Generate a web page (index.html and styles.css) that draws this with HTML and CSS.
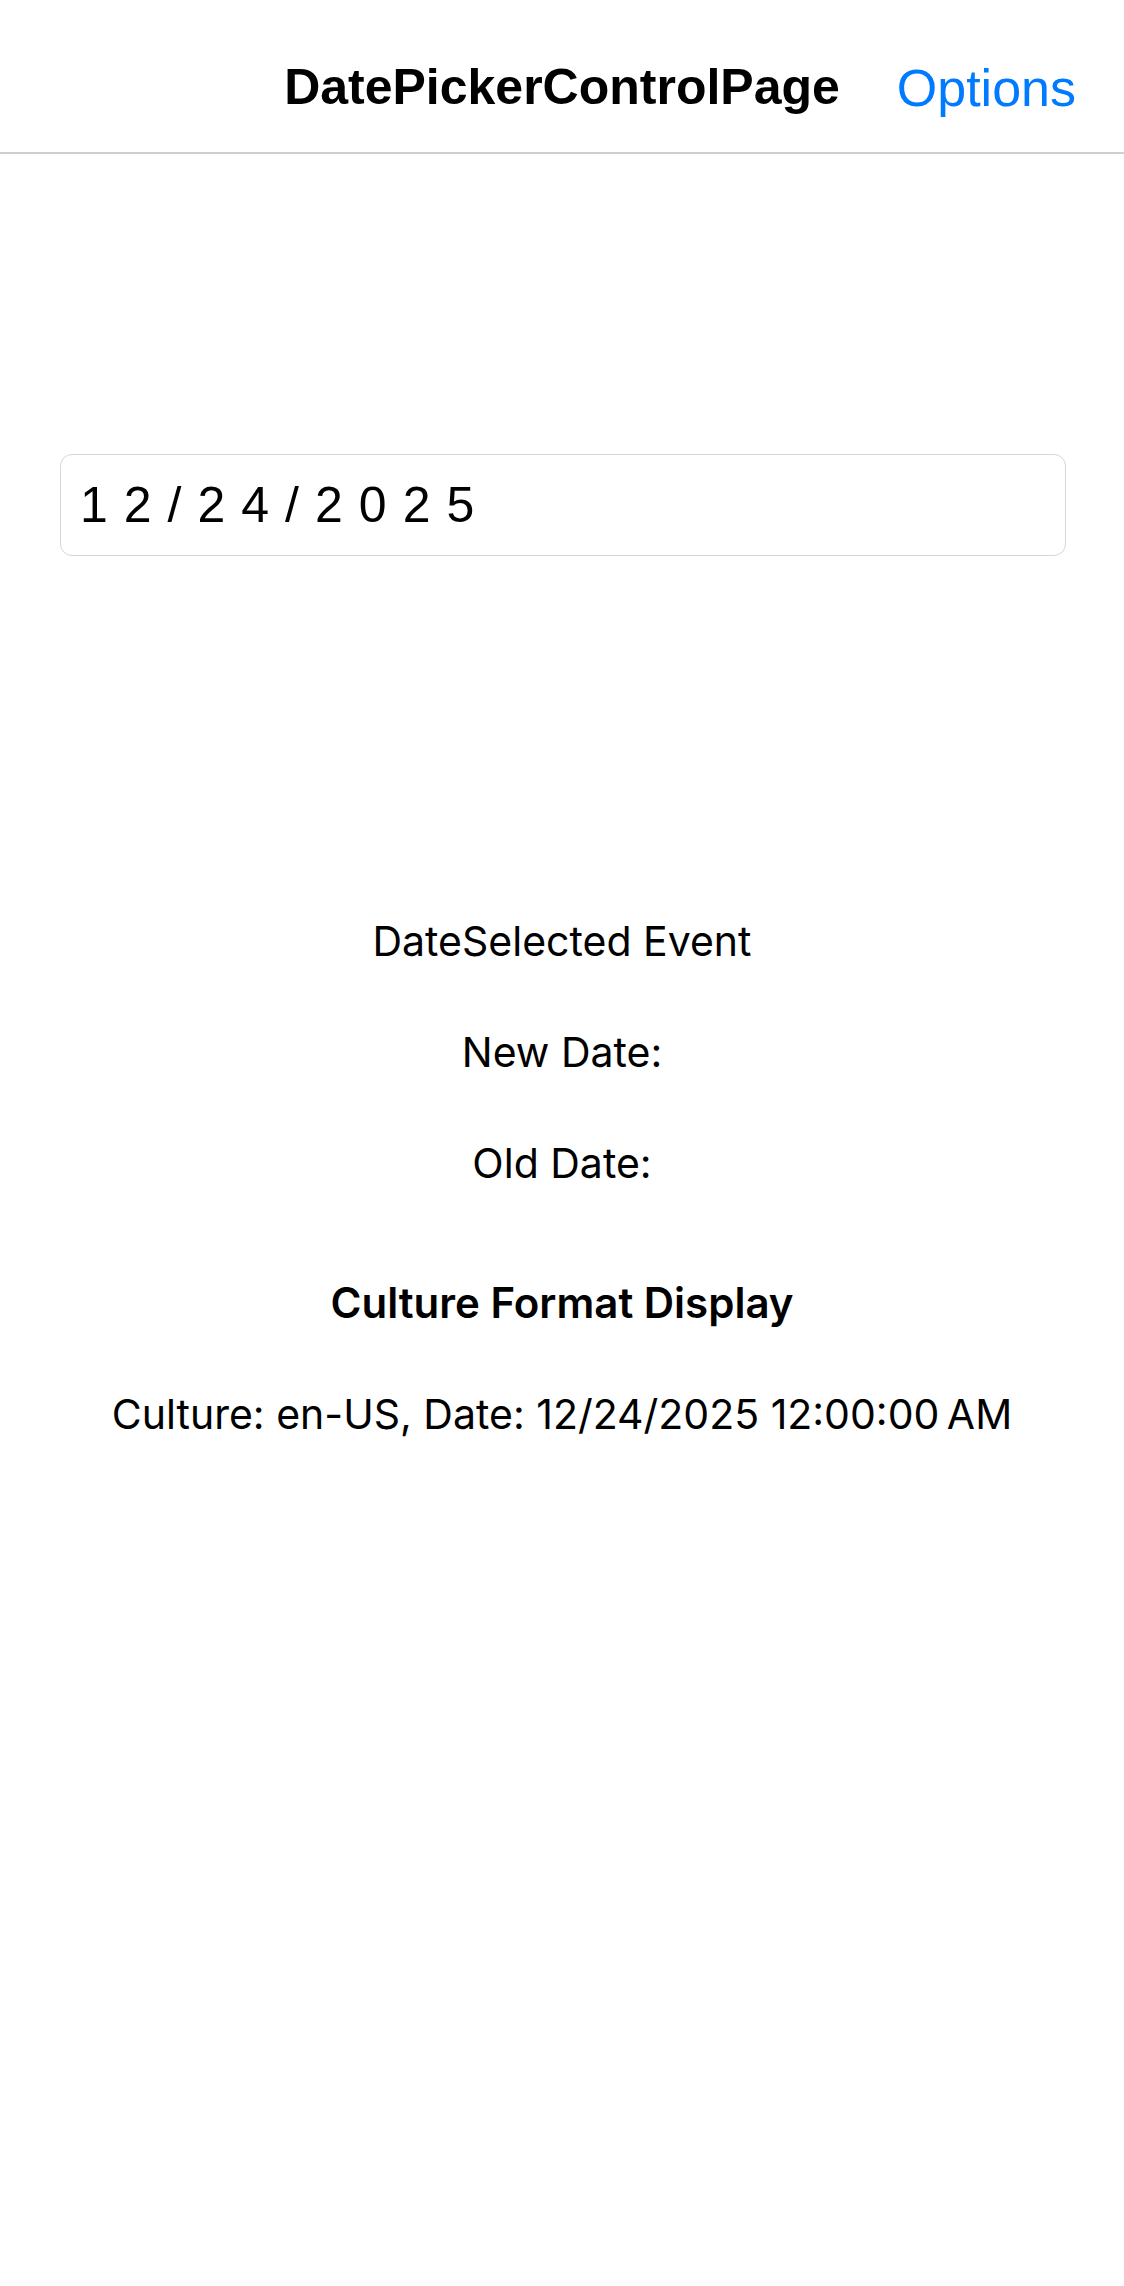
FILE: index.html
```html
<!DOCTYPE html>
<html lang="en">
<head>
<meta charset="utf-8">
<title>DatePickerControlPage</title>
<link rel="stylesheet" href="styles.css">
</head>
<body>
<header class="navbar">
  <h1 class="nav-title">DatePickerControlPage</h1>
  <a class="nav-action" href="#">Options</a>
</header>
<main class="content">
  <div class="date-field">12/24/2025</div>
  <section class="events">
    <p class="line">DateSelected Event</p>
    <p class="line">New Date:</p>
    <p class="line">Old Date:</p>
    <p class="line heading">Culture Format Display</p>
    <p class="line culture">Culture: en-US, Date: 12/24/2025 12:00:00&#8239;AM</p>
  </section>
</main>
</body>
</html>
```

FILE: styles.css
```css
html, body {
  margin: 0;
  padding: 0;
  background: #ffffff;
}
body {
  font-family: "Inter", "Liberation Sans", sans-serif;
  color: #000000;
  width: 1124px;
  min-height: 2286px;
}
.navbar {
  position: relative;
  height: 152px;
  border-bottom: 2px solid #cfcfd2;
  display: flex;
  align-items: center;
  justify-content: center;
}
.nav-title {
  margin: 0;
  font-family: "Liberation Sans", sans-serif;
  font-weight: 700;
  font-size: 50px;
  letter-spacing: 0;
  line-height: 60px;
  margin-top: 22px;
}
.nav-action {
  position: absolute;
  right: 48px;
  top: 58px;
  font-family: "Liberation Sans", sans-serif;
  font-size: 52px;
  line-height: 60px;
  color: #007aff;
  text-decoration: none;
}
.content {
  padding: 0 58px 0 60px;
}
.date-field {
  margin-top: 300px;
  height: 100px;
  border: 1px solid #d6d6d8;
  border-radius: 12px;
  display: flex;
  align-items: center;
  padding-left: 19px;
  font-family: "Liberation Sans", sans-serif;
  font-size: 50px;
  letter-spacing: 16px;
}
.events {
  margin-top: 355px;
  display: flex;
  flex-direction: column;
  align-items: center;
  margin-left: -60px;
  margin-right: -58px;
}
.line {
  margin: 0 0 51px 0;
  height: 60px;
  line-height: 60px;
  font-size: 41px;
  text-align: center;
}
.heading {
  margin-top: 29px;
  font-size: 42px;
  font-weight: 600;
}
```
